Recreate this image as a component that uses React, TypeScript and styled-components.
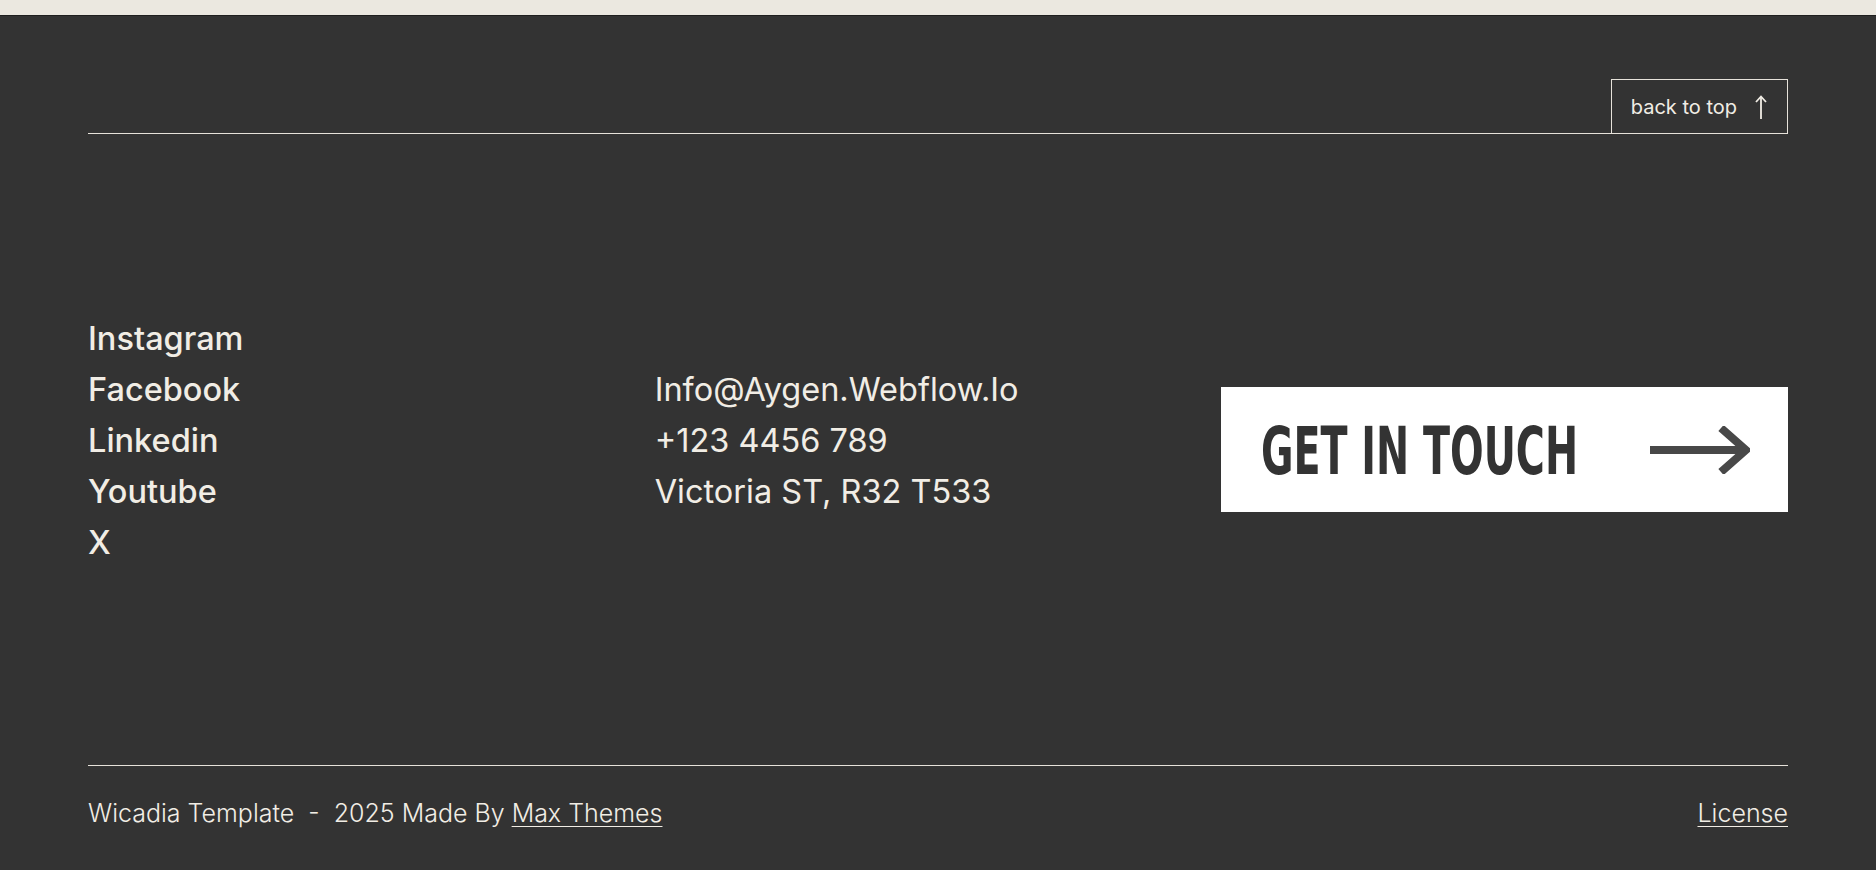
import styled, { createGlobalStyle } from "styled-components";

const GlobalStyle = createGlobalStyle`
    html, body {
        margin: 0;
        padding: 0;
        background: #ebe8e0;
    }
    body {
        font-family: Inter, "Noto Sans", sans-serif;
    }
`

const Page = styled.div`
    padding-top: 15px;
    background: #ebe8e0;
`

const Footer = styled.footer`
    background: #333333;
    border-top: 1px solid #1f1f1f;
    color: #f1ede5;
    padding: 63px 88px 0;
`

const TopRow = styled.div`
    display: flex;
    justify-content: flex-end;
    border-bottom: 1px solid #e6e2da;
`

const BackToTop = styled.a`
    display: flex;
    align-items: center;
    gap: 18px;
    height: 53px;
    padding: 0 20px 0 19px;
    border: 1px solid #e6e2da;
    border-bottom: none;
    color: #f1ede5;
    font-size: 20px;
    text-decoration: none;
    cursor: pointer;
`

const Main = styled.div`
    display: grid;
    grid-template-columns: repeat(3, 1fr);
    align-items: center;
    min-height: 631px;
`

const LinkList = styled.div`
    display: flex;
    flex-direction: column;
    margin-bottom: 19px;
`

const BigLink = styled.a<{ $bold?: boolean }>`
    font-size: 32.5px;
    line-height: 51px;
    font-weight: ${p => (p.$bold ? 500 : 400)};
    color: #f1ede5;
    text-decoration: none;
    width: fit-content;
`

const Cta = styled.a`
    display: flex;
    align-items: center;
    justify-content: space-between;
    height: 125px;
    padding: 0 38px 0 40px;
    background: #ffffff;
    color: #333333;
    text-decoration: none;
    overflow: hidden;
`

const CtaText = styled.span`
    display: inline-block;
    flex: 0 1 auto;
    min-width: 0;
    font-family: "DejaVu Sans Condensed", "Liberation Sans", sans-serif;
    font-weight: 700;
    font-size: 66px;
    line-height: 1;
    white-space: nowrap;
    transform: scaleX(0.667);
    transform-origin: left center;
    margin-top: 4px;
`

const ArrowBox = styled.span`
    display: flex;
    flex-shrink: 0;
`

const BottomRow = styled.div`
    display: flex;
    justify-content: space-between;
    align-items: center;
    border-top: 1px solid #e6e2da;
    padding: 29px 0 39px;
    font-size: 25px;
    line-height: 36px;
    font-weight: 300;
`

const Credit = styled.p`
    margin: 0;
    white-space: pre;
`

const Underlined = styled.a`
    color: #f1ede5;
    text-decoration: underline;
    text-underline-offset: 4px;
    text-decoration-thickness: 1px;
`

const ArrowRight = () => (
    <svg width="100" height="48" viewBox="0 0 100 48" fill="none">
        <line x1="0" y1="24" x2="96" y2="24" stroke="#484848" strokeWidth="8" />
        <polyline points="71,2 96,24 71,46" stroke="#484848" strokeWidth="8" fill="none" />
    </svg>
)

const ArrowUp = () => (
    <svg width="12" height="24" viewBox="0 0 12 24" fill="none">
        <line x1="6" y1="2" x2="6" y2="24" stroke="#f1ede5" strokeWidth="1.8" />
        <polyline points="1,7 6,1.5 11,7" stroke="#f1ede5" strokeWidth="1.8" fill="none" />
    </svg>
)

const socials = ["Instagram", "Facebook", "Linkedin", "Youtube", "X"];
const contacts = ["Info@Aygen.Webflow.Io", "+123 4456 789", "Victoria ST, R32 T533"];

const App = () => {
    return (
        <Page>
            <GlobalStyle />
            <Footer>
                <TopRow>
                    <BackToTop>
                        back to top
                        <ArrowUp />
                    </BackToTop>
                </TopRow>
                <Main>
                    <LinkList>
                        {socials.map(s => (
                            <BigLink key={s} $bold>{s}</BigLink>
                        ))}
                    </LinkList>
                    <LinkList>
                        {contacts.map(c => (
                            <BigLink key={c}>{c}</BigLink>
                        ))}
                    </LinkList>
                    <Cta>
                        <CtaText>GET IN TOUCH</CtaText>
                        <ArrowBox>
                            <ArrowRight />
                        </ArrowBox>
                    </Cta>
                </Main>
                <BottomRow>
                    <Credit>
                        Wicadia Template  -  2025 Made By <Underlined>Max Themes</Underlined>
                    </Credit>
                    <Underlined>License</Underlined>
                </BottomRow>
            </Footer>
        </Page>
    )
}

export default App;
